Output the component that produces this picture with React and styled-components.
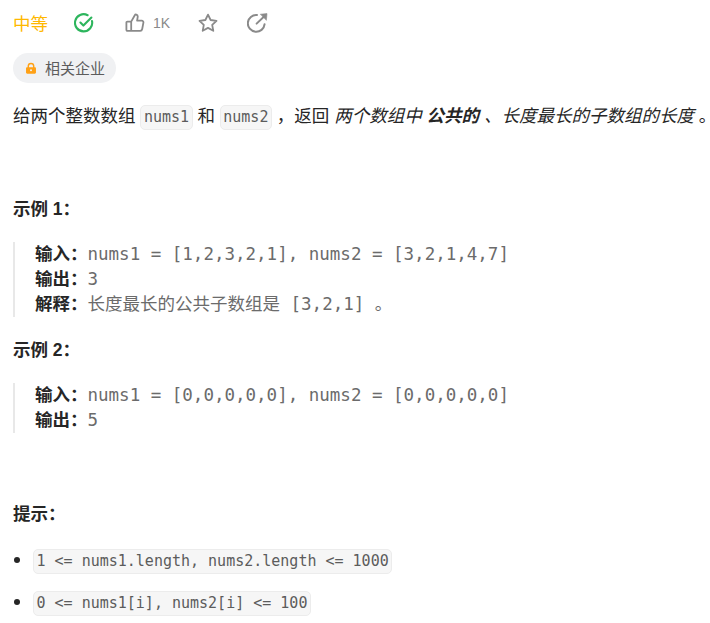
import styled, { createGlobalStyle } from 'styled-components'

const GlobalStyle = createGlobalStyle`
  html, body {
    margin: 0;
    padding: 0;
    background: #fff;
  }
  body {
    font-family: "Liberation Sans", "Noto Sans CJK SC", sans-serif;
    color: #262626;
    overflow: hidden;
  }
`;

const Page = styled.div`
  padding: 0 0 0 13px;
  width: 697px;
  height: 623px;
  overflow: hidden;
  font-size: 17.5px;
  line-height: 25px;
`;

const MetaRow = styled.div`
  display: flex;
  align-items: center;
  height: 24px;
  margin-top: 12px;
`;

const Difficulty = styled.span`
  color: #ffb800;
  font-size: 17.5px;
  width: 61px;
`;

const IconSlot = styled.span`
  display: flex;
  align-items: center;
  gap: 8px;
  margin-top: -2px;
  color: #8a8a8a;
  font-size: 14px;
  width: ${props => props.width}px;
`;

const TagRow = styled.div`
  margin-top: 17px;
  display: flex;
`;

const Tag = styled.div`
  display: flex;
  align-items: center;
  gap: 8px;
  height: 30px;
  padding: 0 11px 0 12px;
  border-radius: 15px;
  background: #f0f1f3;
  color: #5c5c5c;
  font-size: 15px;
`;

const Paragraph = styled.p`
  margin: 21px 0 0;
  white-space: nowrap;
`;

const Code = styled.code`
  display: inline-block;
  font-family: "DejaVu Sans Mono", monospace;
  font-size: 15px;
  line-height: 23px;
  color: #5c5c5c;
  background: #f6f6f6;
  border: 1px solid #ececec;
  border-radius: 5px;
  padding: 0 2.5px;
`;

const Heading = styled.p`
  margin: ${props => props.top}px 0 0;
  font-weight: bold;
`;

const Example = styled.div`
  margin-top: ${props => props.top}px;
  border-left: 2px solid #e8e8e8;
  padding-left: 20px;
  font-family: "DejaVu Sans Mono", monospace;
  font-size: 17.5px;
  line-height: 25px;
  color: #6b6b6b;
  white-space: pre;
`;

const Label = styled.strong`
  font-family: "Liberation Sans", "Noto Sans CJK SC", sans-serif;
  color: #262626;
`;

const PlainCn = styled.span`
  font-family: "Liberation Sans", "Noto Sans CJK SC", sans-serif;
`;

const List = styled.ul`
  margin: 22px 0 0;
  padding: 0;
  list-style: none;
`;

const Item = styled.li`
  display: flex;
  align-items: center;
  height: 25px;
  margin-bottom: 17px;
  &::before {
    content: '';
    width: 6px;
    height: 6px;
    border-radius: 50%;
    background: #262626;
    margin: -4px 13px 0 1px;
  }
`;

function CheckIcon() {
  return (
    <svg width="20" height="20" viewBox="0 0 20 20" fill="none" stroke="#2db55d" strokeWidth="2.1" strokeLinecap="round" strokeLinejoin="round">
      <path d="M18 8A8.6 8.6 0 1 1 13.6 2.2" />
      <path d="M6.4 9.6l3 3L17.4 4.6" />
    </svg>
  )
}

function LikeIcon() {
  return (
    <svg width="20" height="20" viewBox="0 0 20 20" fill="none" stroke="#8a8a8a" strokeWidth="1.8" strokeLinejoin="round">
      <path d="M6.2 8.6v9.2H2.4a1 1 0 0 1-1-1V9.6a1 1 0 0 1 1-1h3.8l3.6-6.4c.3-.6 1-.9 1.6-.6 1 .4 1.5 1.3 1.3 2.4L12.1 7.6h4.6c1.1 0 1.9 1 1.7 2.1l-1.2 6.3c-.2 1-1 1.8-2 1.8H6.2" />
    </svg>
  )
}

function StarIcon() {
  return (
    <svg width="20" height="20" viewBox="0 0 20 20" fill="none" stroke="#8a8a8a" strokeWidth="1.8" strokeLinejoin="round">
      <path d="M10 1.6l2.6 5.4 5.9.8-4.3 4.1 1.1 5.9L10 14.9l-5.3 2.9 1.1-5.9-4.3-4.1 5.9-.8z" />
    </svg>
  )
}

function ShareIcon() {
  return (
    <svg width="21" height="20" viewBox="0 0 21 20" fill="none" stroke="#8a8a8a" strokeWidth="2" strokeLinecap="round" strokeLinejoin="round">
      <path d="M17.6 11.2A8.4 8.4 0 1 1 10 2" />
      <path d="M9.6 10.6L17.6 3" />
      <path d="M13.6 1.2L20 .6l-.6 6.4z" fill="#8a8a8a" strokeWidth="0.6" />
    </svg>
  )
}

function LockIcon() {
  return (
    <svg width="12" height="13" viewBox="0 0 14 14" fill="#ffa116">
      <path d="M3 5.5V4.2a4 4 0 0 1 8 0v1.3h.4c.9 0 1.4.6 1.4 1.4v4.7c0 .8-.6 1.4-1.4 1.4H2.6c-.8 0-1.4-.6-1.4-1.4V6.9c0-.8.6-1.4 1.4-1.4zm1.7 0h4.6V4.2a2.3 2.3 0 0 0-4.6 0zM7 7.9a1.2 1.2 0 1 0 0 2.4 1.2 1.2 0 0 0 0-2.4z" fillRule="evenodd" />
    </svg>
  )
}

export default function App() {
  return (
    <>
      <GlobalStyle />
      <Page>
        <MetaRow>
          <Difficulty>中等</Difficulty>
          <IconSlot width={51}><CheckIcon /></IconSlot>
          <IconSlot width={73}><LikeIcon /><span>1K</span></IconSlot>
          <IconSlot width={49}><StarIcon /></IconSlot>
          <IconSlot width={21}><ShareIcon /></IconSlot>
        </MetaRow>
        <TagRow>
          <Tag><LockIcon />相关企业</Tag>
        </TagRow>
        <Paragraph>
          给两个整数数组 <Code>nums1</Code> 和 <Code>nums2</Code> ，返回 <em>两个数组中 <strong>公共的</strong> 、长度最长的子数组的长度</em> 。
        </Paragraph>
        <Heading top={67}>示例 1：</Heading>
        <Example top={20}>
          <Label>输入：</Label>nums1 = [1,2,3,2,1], nums2 = [3,2,1,4,7]{'\n'}
          <Label>输出：</Label>3{'\n'}
          <Label>解释：</Label><PlainCn>长度最长的公共子数组是</PlainCn> [3,2,1] <PlainCn>。</PlainCn>
        </Example>
        <Heading top={21}>示例 2：</Heading>
        <Example top={20}>
          <Label>输入：</Label>nums1 = [0,0,0,0,0], nums2 = [0,0,0,0,0]{'\n'}
          <Label>输出：</Label>5
        </Example>
        <Heading top={69}>提示：</Heading>
        <List>
          <Item><Code>1 &lt;= nums1.length, nums2.length &lt;= 1000</Code></Item>
          <Item><Code>0 &lt;= nums1[i], nums2[i] &lt;= 100</Code></Item>
        </List>
      </Page>
    </>
  )
}
